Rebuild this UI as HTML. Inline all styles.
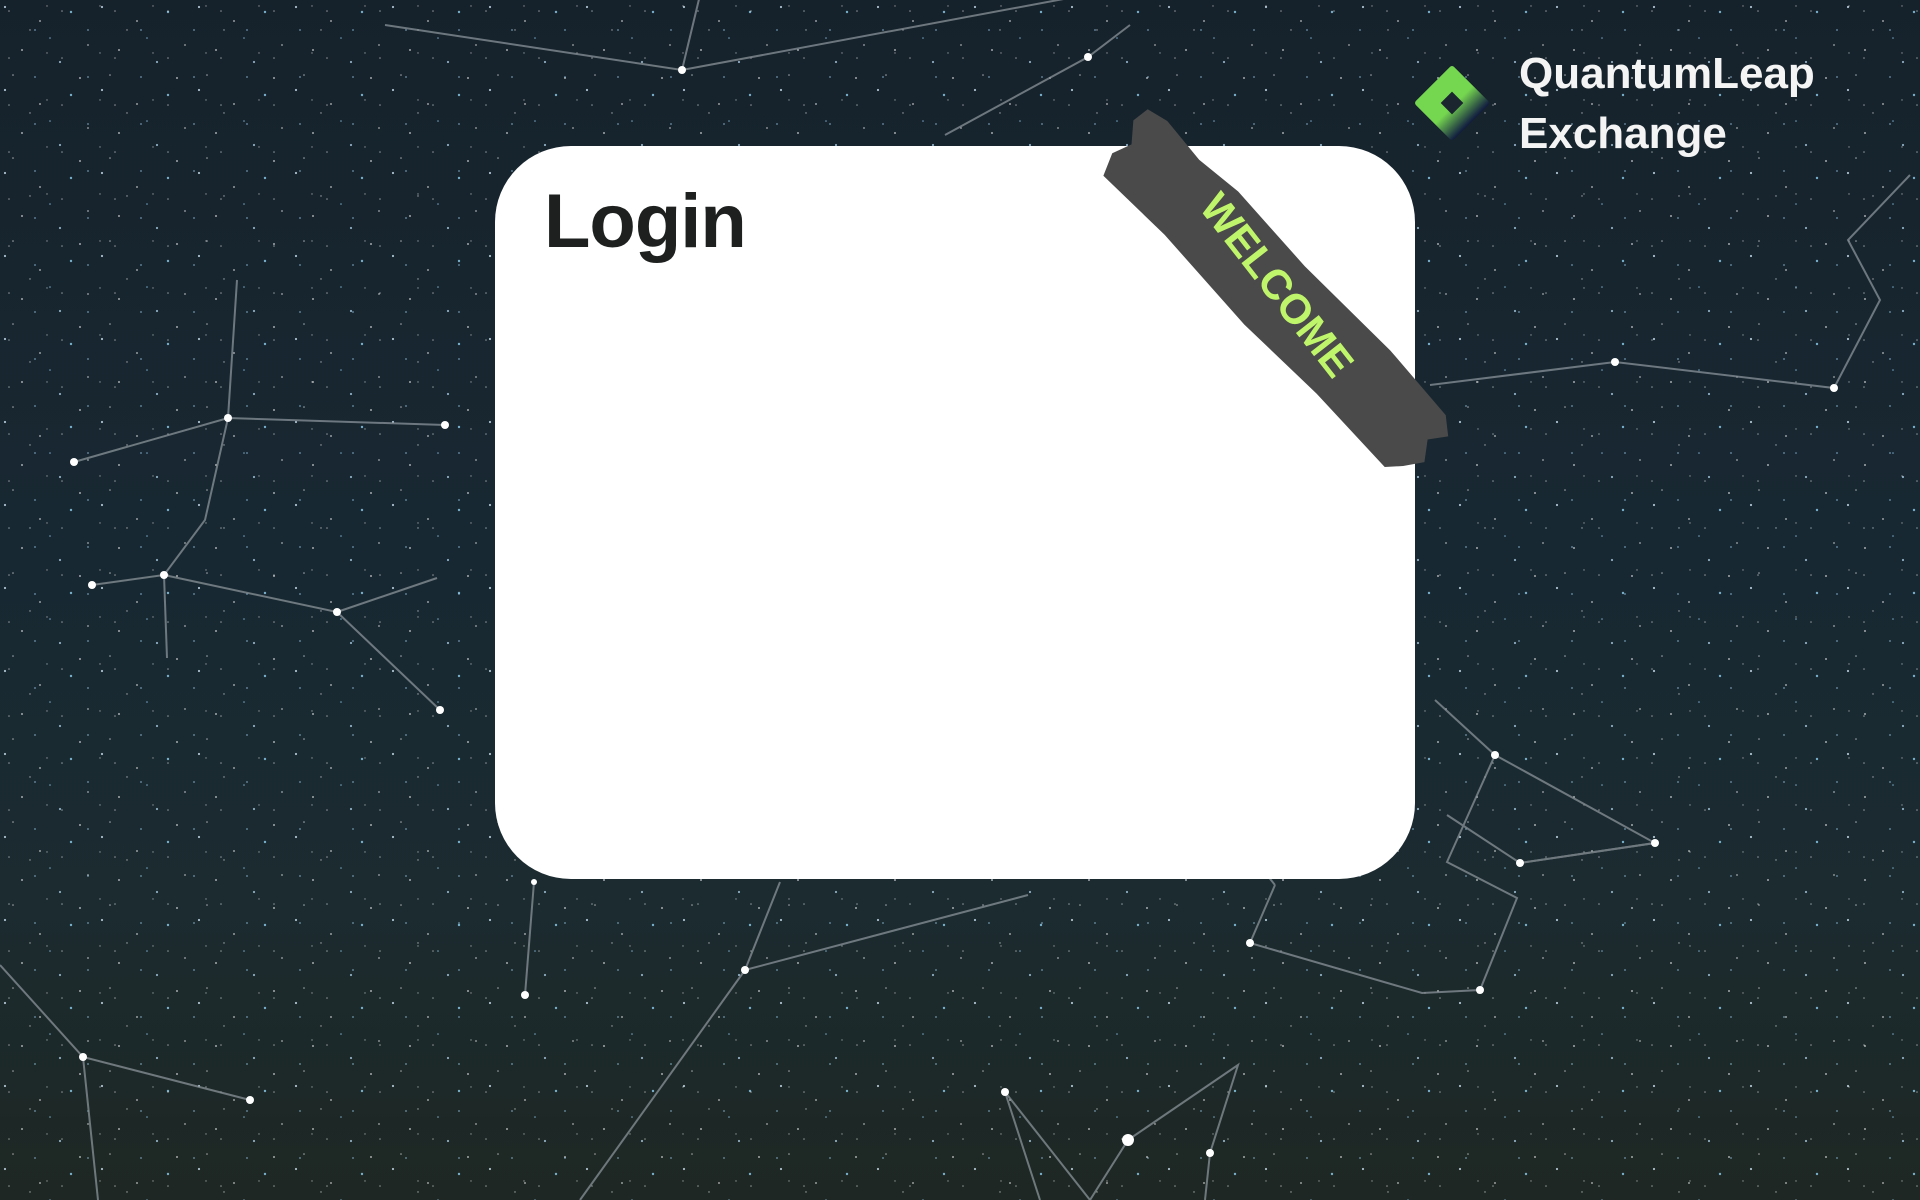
<!DOCTYPE html>
<html><head><meta charset="utf-8"><style>
html,body{margin:0;padding:0;width:1920px;height:1200px;overflow:hidden}
body{background:linear-gradient(180deg,#16222b 0%,#182832 45%,#1b2b30 75%,#1e2723 100%);position:relative;font-family:"Liberation Sans",sans-serif}
#bg{position:absolute;left:0;top:0}
.card{position:absolute;left:495px;top:146px;width:920px;height:733px;background:#fff;border-radius:76px}
.login{position:absolute;left:544px;top:178px;font-size:76px;font-weight:bold;color:#1d201f;letter-spacing:-1px}
.brand{position:absolute;left:1519px;top:44px;color:#f4f4f4;font-size:44px;font-weight:bold;line-height:60px}
</style></head><body>
<svg id="bg" width="1920" height="1200" viewBox="0 0 1920 1200">
<defs>
<pattern id="st" width="97" height="83" patternUnits="userSpaceOnUse">
<circle cx="5" cy="7" r="1.1" fill="#cfe6f5" opacity=".8"/><circle cx="40" cy="21" r=".9" fill="#fff" opacity=".7"/>
<circle cx="71" cy="12" r="1.2" fill="#8fd0f0" opacity=".8"/><circle cx="22" cy="50" r="1" fill="#fff" opacity=".6"/>
<circle cx="60" cy="62" r="1.1" fill="#bfe4ff" opacity=".7"/><circle cx="88" cy="45" r=".9" fill="#fff" opacity=".6"/>
<circle cx="13" cy="75" r=".8" fill="#fff" opacity=".6"/><circle cx="50" cy="38" r=".8" fill="#9fd8ff" opacity=".7"/>
<circle cx="80" cy="78" r="1" fill="#fff" opacity=".6"/><circle cx="30" cy="30" r=".7" fill="#fff" opacity=".6"/>
</pattern>
<pattern id="st2" width="53" height="47" patternUnits="userSpaceOnUse">
<circle cx="9" cy="11" r=".8" fill="#fff" opacity=".5"/><circle cx="35" cy="30" r=".9" fill="#a8dcff" opacity=".6"/><circle cx="47" cy="6" r=".7" fill="#fff" opacity=".5"/>
</pattern>
</defs>
<rect width="1920" height="1200" fill="url(#st)"/>
<rect width="1920" height="1200" fill="url(#st2)"/>
<g stroke="#8a9399" stroke-width="2" fill="none" opacity=".75">
<polyline points="385,25 682,70 1085,-5"/><polyline points="682,70 700,-5"/>
<polyline points="945,135 1088,57 1130,25"/>
<polyline points="74,462 228,418 445,425"/><polyline points="237,280 228,418 205,520 164,575 92,585"/>
<polyline points="164,575 167,658"/><polyline points="164,575 337,612 440,710"/><polyline points="337,612 437,578"/>
<polyline points="1430,385 1615,362 1834,388 1880,300 1848,240 1910,175"/>
<polyline points="1435,700 1495,755 1655,843 1520,863 1447,815"/><polyline points="1495,755 1447,862 1517,898 1480,990 1422,993 1250,943 1275,885"/>
<polyline points="1520,863 1655,843"/><polyline points="1275,885 1255,860 1365,860"/>
<polyline points="534,882 525,995"/><polyline points="780,882 745,970 1028,895"/><polyline points="745,970 580,1200"/>
<polyline points="0,965 83,1057 250,1100"/><polyline points="83,1057 98,1200"/>
<polyline points="1005,1092 1040,1200"/><polyline points="1005,1092 1090,1200"/><polyline points="1128,1140 1238,1065 1210,1153 1205,1200"/><polyline points="1128,1140 1090,1200"/>
</g>
<g fill="#fff">
<circle cx="682" cy="70" r="4"/><circle cx="1088" cy="57" r="4"/><circle cx="228" cy="418" r="4"/><circle cx="445" cy="425" r="4"/><circle cx="74" cy="462" r="4"/>
<circle cx="164" cy="575" r="4"/><circle cx="92" cy="585" r="4"/><circle cx="337" cy="612" r="4"/><circle cx="440" cy="710" r="4"/><circle cx="1615" cy="362" r="4"/><circle cx="1834" cy="388" r="4"/>
<circle cx="1655" cy="843" r="4"/><circle cx="1520" cy="863" r="4"/><circle cx="1495" cy="755" r="4"/><circle cx="1480" cy="990" r="4"/><circle cx="1250" cy="943" r="4"/>
<circle cx="534" cy="882" r="3"/><circle cx="525" cy="995" r="4"/><circle cx="745" cy="970" r="4"/><circle cx="83" cy="1057" r="4"/><circle cx="250" cy="1100" r="4"/>
<circle cx="1128" cy="1140" r="6"/><circle cx="1005" cy="1092" r="4"/><circle cx="1210" cy="1153" r="4"/>
</g>
</svg>
<div class="card"></div>
<div class="login">Login</div>
<svg style="position:absolute;left:0;top:0" width="1920" height="1200">
<g transform="translate(1276,294) rotate(46)">
<path d="M-222,-36 L-200,-42 L-150,-38 L-100,-44 L0,-40 L120,-43 L205,-38 L222,-25 L210,-8 L224,10 L212,28 L200,42 L100,40 L0,44 L-120,39 L-205,42 L-215,20 L-208,0 L-224,-18 Z" fill="#4a4a4a"/>
</g>
<text x="0" y="0" transform="translate(1277,285) rotate(52)" text-anchor="middle" dominant-baseline="central" font-family="Liberation Sans, sans-serif" font-weight="bold" font-size="42" fill="#bff56a">WELCOME</text>
<defs><linearGradient id="lg" x1="0" y1="0" x2="1" y2="0"><stop offset="0" stop-color="#75d650"/><stop offset=".55" stop-color="#75d650"/><stop offset="1" stop-color="#101a40"/></linearGradient></defs>
<g transform="translate(1452,103) rotate(45)">
<rect x="-27" y="-27" width="54" height="54" rx="3" fill="url(#lg)"/>
<rect x="-8" y="-8" width="16" height="16" fill="#1a2530"/>
</g>
</svg>
<div class="brand">QuantumLeap<br>Exchange</div>
</body></html>
